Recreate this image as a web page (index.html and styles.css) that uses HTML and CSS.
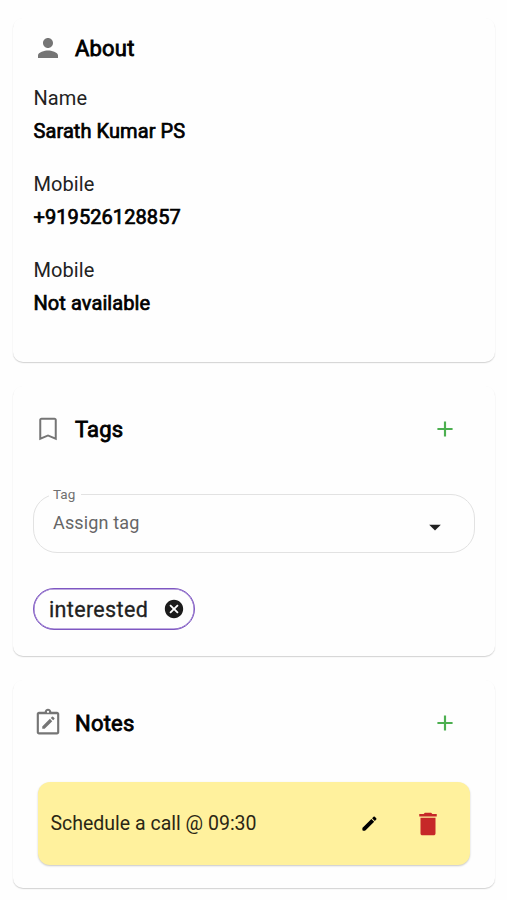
FILE: index.html
```html
<!DOCTYPE html>
<html lang="en">
<head>
<meta charset="utf-8">
<title>Contact details</title>
<link rel="stylesheet" href="styles.css">
</head>
<body>
<main class="panel">
  <section class="card about">
    <header class="card-head">
      <svg class="icon" viewBox="0 0 24 24"><path d="M12 12c2.210 0 4-1.790 4-4s-1.790-4-4-4-4 1.790-4 4 1.790 4 4 4zm0 2c-2.670 0-8 1.340-8 4v2h16v-2c0-2.660-5.330-4-8-4z"/></svg>
      <h2>About</h2>
    </header>
    <dl class="details">
      <div class="detail"><dt>Name</dt><dd>Sarath Kumar PS</dd></div>
      <div class="detail"><dt>Mobile</dt><dd>+919526128857</dd></div>
      <div class="detail"><dt>Mobile</dt><dd>Not available</dd></div>
    </dl>
  </section>

  <section class="card tags">
    <header class="card-head">
      <svg class="icon" viewBox="0 0 24 24"><path d="M17.200 3H6.800C5.800 3 5 3.800 5 4.800V21l7-3 7 3V4.800c0-1-.8-1.800-1.800-1.800zm.2 15.600L12 16.300l-5.400 2.300V4.600h10.800v14z"/></svg>
      <h2>Tags</h2>
      <svg class="add" viewBox="0 0 24 24"><path d="M19 13h-6v6h-2v-6H5v-2h6V5h2v6h6v2z"/></svg>
    </header>
    <div class="select">
      <span class="select-label">Tag</span>
      <span class="select-value">Assign tag</span>
      <svg class="arrow" viewBox="0 0 24 24"><path d="M7 10l5 5 5-5z"/></svg>
    </div>
    <div class="chip">
      <span>interested</span>
      <svg class="chip-close" viewBox="0 0 24 24"><path d="M12 2C6.470 2 2 6.470 2 12s4.470 10 10 10 10-4.470 10-10S17.530 2 12 2zm5 13.590L15.590 17 12 13.410 8.410 17 7 15.590 10.590 12 7 8.410 8.410 7 12 10.590 15.590 7 17 8.410 13.410 12 17 15.590z"/></svg>
    </div>
  </section>

  <section class="card notes">
    <header class="card-head">
      <svg class="icon" viewBox="0 0 24 24"><path fill-rule="evenodd" d="M19.200 2.900h-4.500C14.300 1.500 13.300.6 12 .6s-2.300.9-2.700 2.300H4.800C3.800 2.900 3 3.700 3 4.700v14.600c0 1 .8 1.800 1.800 1.800h14.400c1 0 1.800-.8 1.800-1.800V4.700c0-1-.8-1.800-1.800-1.800zM12 2.100a.9.9 0 1 1 0 1.800.9.9 0 0 1 0-1.800zM4.700 4.900h14.600v14.400H4.700z"/><path d="M7.400 14.700l6.100-6.100 1.900 1.900-6.100 6.100H7.400zM14.200 7.900l1-1q.4-.4.8 0l1.100 1.100q.4.4 0 .8l-1 1z"/></svg>
      <h2>Notes</h2>
      <svg class="add" viewBox="0 0 24 24"><path d="M19 13h-6v6h-2v-6H5v-2h6V5h2v6h6v2z"/></svg>
    </header>
    <div class="note">
      <span class="note-text">Schedule a call @ 09:30</span>
      <svg class="edit" viewBox="0 0 24 24"><path d="M3.600 17.100L14.400 6.300l3.500 3.500L7.100 20.600q-.4.400-1 .4H4.200Q3 21 3 19.800v-1.700q0-.6.6-1zM15.300 5.400l1.800-1.800q.8-.8 1.600 0l1.800 1.800q.8.8 0 1.600l-1.800 1.800z"/></svg>
      <svg class="delete" viewBox="0 0 24 24"><path d="M6 19.400c0 1.100.6 1.600 1.600 1.600h8.800c1 0 1.600-.5 1.600-1.600V7H6v12.400zM19 4h-3.500l-1-1h-5l-1 1H5v2h14V4z"/></svg>
    </div>
  </section>
</main>
</body>
</html>
```

FILE: styles.css
```css
* {
  box-sizing: border-box;
}

body {
  margin: 0;
  background: #fefefe;
  font-family: Roboto, sans-serif;
  color: #000;
}

svg {
  display: block;
  flex: none;
}

.panel {
  display: flex;
  flex-direction: column;
  gap: 24px;
  padding: 18px 12px 12px 13px;
}

.card {
  padding: 0 20px;
  border-radius: 10px;
  background: #fefefe;
  box-shadow: 0 1px 1px rgba(0, 0, 0, 0.13), 0 1px 2px rgba(0, 0, 0, 0.06);
}

.about {
  height: 344px;
  padding-top: 15px;
}

.tags {
  height: 270px;
  padding-top: 28px;
}

.notes {
  height: 208px;
  padding-top: 28px;
}

.card-head {
  display: flex;
  align-items: center;
  height: 30px;
}

.icon {
  width: 30px;
  height: 30px;
  fill: #757575;
}

h2 {
  margin: 2px 0 0 12px;
  font-size: 22px;
  font-weight: 400;
  letter-spacing: 0.2px;
  line-height: 30px;
  -webkit-text-stroke: 0.8px #000;
}

.add {
  width: 26px;
  height: 26px;
  margin-left: auto;
  margin-right: 17px;
  fill: #4caf50;
}

.details {
  margin: 19px 0 0;
}

.detail {
  height: 86px;
}

dt,
dd {
  margin: 0;
  padding-left: 0.5px;
  font-size: 20px;
  letter-spacing: 0.08px;
  line-height: 32px;
}

dt {
  color: #222;
}

dd {
  padding-top: 1px;
  -webkit-text-stroke: 0.7px #000;
}

.select {
  position: relative;
  display: flex;
  align-items: center;
  height: 59px;
  margin-top: 50px;
  padding: 0 25px 0 19px;
  border: 1px solid #e2e2e2;
  border-radius: 24px;
}

.select-label {
  position: absolute;
  top: -9px;
  left: 15px;
  padding: 0 6px 0 4px;
  background: #fefefe;
  color: #707070;
  font-size: 13.5px;
  line-height: 17px;
}

.select-value {
  margin-top: -2px;
  color: #666;
  font-size: 18px;
  letter-spacing: 0.15px;
}

.arrow {
  width: 28px;
  height: 28px;
  margin: 7px 0 0 auto;
  fill: #212121;
}

.chip {
  display: flex;
  align-items: center;
  justify-content: space-between;
  width: 162px;
  height: 42px;
  margin-top: 35px;
  padding: 0 9px 0 15px;
  border: 1px solid #7e57c2;
  border-radius: 21px;
  box-shadow: inset 0 0 0 0.5px #7e57c2;
  color: #212121;
  font-size: 21.5px;
  letter-spacing: 0.35px;
  -webkit-text-stroke: 0.3px #212121;
}

.chip-close {
  width: 22px;
  height: 22px;
  fill: #1b1b1b;
  -webkit-text-stroke: 0;
}

.note {
  display: flex;
  align-items: center;
  height: 83px;
  margin: 44px 5px 0;
  padding: 0 27px 0 12px;
  border-radius: 12px;
  background: #fff19d;
  box-shadow: 0 1px 2px rgba(0, 0, 0, 0.22);
}

.note-text {
  padding-left: 0.5px;
  color: #2a2614;
  font-size: 19.5px;
}

.edit {
  width: 19px;
  height: 19px;
  margin-left: auto;
}

.delete {
  width: 30px;
  height: 30px;
  margin-left: 34px;
  fill: #c62828;
}
```
